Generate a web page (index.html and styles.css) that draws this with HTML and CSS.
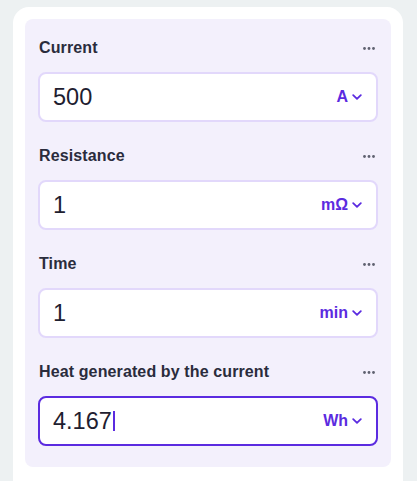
FILE: index.html
```html
<!DOCTYPE html>
<html lang="en">
<head>
<meta charset="utf-8">
<title>Heat generated by the current</title>
<link rel="stylesheet" href="styles.css">
</head>
<body>
<div class="card">
  <div class="panel">
    <div class="field">
      <div class="label-row">
        <span class="label">Current</span>
        <svg class="dots" width="12" height="3" viewBox="0 0 12 3"><circle cx="1.5" cy="1.5" r="1.4"/><circle cx="6" cy="1.5" r="1.4"/><circle cx="10.5" cy="1.5" r="1.4"/></svg>
      </div>
      <div class="box">
        <span class="value">500</span>
        <span class="unit">A<svg class="chev" width="10" height="6" viewBox="0 0 10 6"><path d="M1.2 1.2 L5 4.8 L8.8 1.2"/></svg></span>
      </div>
    </div>
    <div class="field">
      <div class="label-row">
        <span class="label">Resistance</span>
        <svg class="dots" width="12" height="3" viewBox="0 0 12 3"><circle cx="1.5" cy="1.5" r="1.4"/><circle cx="6" cy="1.5" r="1.4"/><circle cx="10.5" cy="1.5" r="1.4"/></svg>
      </div>
      <div class="box">
        <span class="value">1</span>
        <span class="unit">mΩ<svg class="chev" width="10" height="6" viewBox="0 0 10 6"><path d="M1.2 1.2 L5 4.8 L8.8 1.2"/></svg></span>
      </div>
    </div>
    <div class="field">
      <div class="label-row">
        <span class="label">Time</span>
        <svg class="dots" width="12" height="3" viewBox="0 0 12 3"><circle cx="1.5" cy="1.5" r="1.4"/><circle cx="6" cy="1.5" r="1.4"/><circle cx="10.5" cy="1.5" r="1.4"/></svg>
      </div>
      <div class="box">
        <span class="value">1</span>
        <span class="unit">min<svg class="chev" width="10" height="6" viewBox="0 0 10 6"><path d="M1.2 1.2 L5 4.8 L8.8 1.2"/></svg></span>
      </div>
    </div>
    <div class="field">
      <div class="label-row">
        <span class="label">Heat generated by the current</span>
        <svg class="dots" width="12" height="3" viewBox="0 0 12 3"><circle cx="1.5" cy="1.5" r="1.4"/><circle cx="6" cy="1.5" r="1.4"/><circle cx="10.5" cy="1.5" r="1.4"/></svg>
      </div>
      <div class="box active">
        <span class="value">4.167<span class="caret"></span></span>
        <span class="unit">Wh<svg class="chev" width="10" height="6" viewBox="0 0 10 6"><path d="M1.2 1.2 L5 4.8 L8.8 1.2"/></svg></span>
      </div>
    </div>
  </div>
</div>
</body>
</html>
```

FILE: styles.css
```css
* { box-sizing: border-box; }
body {
  margin: 0;
  background: #edf1f2;
  padding: 7px 14px 0 13px;
  font-family: "Liberation Sans", Arial, sans-serif;
}
.card {
  background: #ffffff;
  border-radius: 16px 16px 0 0;
  padding: 12px 12px 14px 12px;
}
.panel {
  background: #f3f0fc;
  border-radius: 8px;
  padding: 19px 13px 21px 13px;
  display: flex;
  flex-direction: column;
  gap: 24px;
}
.label-row {
  display: flex;
  justify-content: space-between;
  align-items: center;
  height: 20px;
  margin-bottom: 14px;
  padding-right: 3px;
}
.label {
  font-weight: 700;
  font-size: 16px;
  line-height: 20px;
  letter-spacing: 0.12px;
  color: #2a2c3c;
  padding-left: 1px;
}
.dots { fill: #5f6170; display: block; }
.box {
  height: 50px;
  border: 2px solid #e2d8fb;
  border-radius: 8px;
  background: #ffffff;
  display: flex;
  align-items: center;
  justify-content: space-between;
  padding: 0 14px 0 13px;
}
.box.active { border-color: #5b2be0; }
.value {
  font-size: 23.5px;
  color: #1e2030;
  display: flex;
  align-items: center;
}
.caret {
  display: inline-block;
  width: 2px;
  height: 20px;
  background: #5b2be0;
  margin-left: 1px;
}
.unit {
  display: flex;
  align-items: center;
  gap: 4px;
  font-weight: 700;
  font-size: 16px;
  color: #5b2be0;
}
.chev {
  display: block;
  fill: none;
  stroke: #5b2be0;
  stroke-width: 1.8;
  stroke-linecap: round;
  stroke-linejoin: round;
}
```
